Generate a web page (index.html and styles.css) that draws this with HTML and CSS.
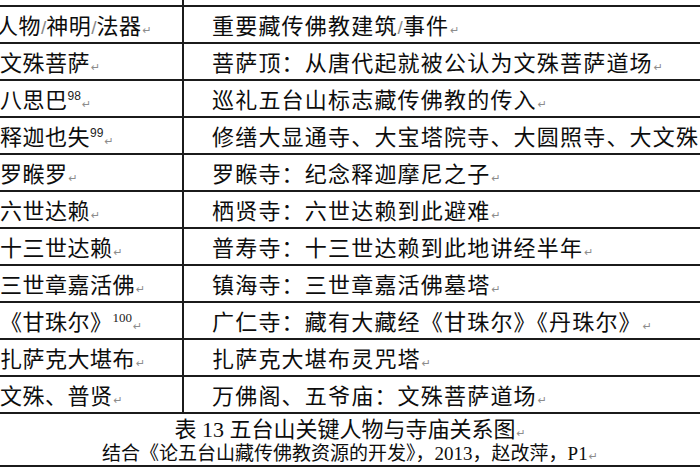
FILE: index.html
```html
<!DOCTYPE html>
<html lang="zh">
<head>
<meta charset="utf-8">
<link rel="stylesheet" href="styles.css">
</head>
<body>
<div class="sheet">
  <table class="grid">
    <colgroup><col class="c1"><col class="c2"></colgroup>
    <tr class="stub"><td class="k"></td><td class="v"></td></tr>
    <tr><td class="k"><div class="cell first">人物<span class="sl">/</span>神明<span class="sl">/</span>法器<span class="ret">↵</span></div></td><td class="v"><div class="cell">重要藏传佛教建筑<span class="sl">/</span>事件<span class="ret">↵</span></div></td></tr>
    <tr><td class="k"><div class="cell">文殊菩萨<span class="ret">↵</span></div></td><td class="v"><div class="cell">菩萨顶：从唐代起就被公认为文殊菩萨道场<span class="ret">↵</span></div></td></tr>
    <tr><td class="k"><div class="cell">八思巴<sup class="fn">98</sup><span class="ret">↵</span></div></td><td class="v"><div class="cell">巡礼五台山标志藏传佛教的传入<span class="ret">↵</span></div></td></tr>
    <tr><td class="k"><div class="cell">释迦也失<sup class="fn">99</sup><span class="ret">↵</span></div></td><td class="v"><div class="cell">修缮大显通寺、大宝塔院寺、大圆照寺、大文殊寺<span class="ret">↵</span></div></td></tr>
    <tr><td class="k"><div class="cell">罗睺罗<span class="ret">↵</span></div></td><td class="v"><div class="cell">罗睺寺：纪念释迦摩尼之子<span class="ret">↵</span></div></td></tr>
    <tr><td class="k"><div class="cell">六世达赖<span class="ret">↵</span></div></td><td class="v"><div class="cell">栖贤寺：六世达赖到此避难<span class="ret">↵</span></div></td></tr>
    <tr><td class="k"><div class="cell">十三世达赖<span class="ret">↵</span></div></td><td class="v"><div class="cell">普寿寺：十三世达赖到此地讲经半年<span class="ret">↵</span></div></td></tr>
    <tr><td class="k"><div class="cell">三世章嘉活佛<span class="ret">↵</span></div></td><td class="v"><div class="cell">镇海寺：三世章嘉活佛墓塔<span class="ret">↵</span></div></td></tr>
    <tr><td class="k"><div class="cell">《甘珠尔》<sup class="fn serif">100</sup><span class="ret">↵</span></div></td><td class="v"><div class="cell">广仁寺：藏有大藏经《甘珠尔》《丹珠尔》<span class="ret">↵</span></div></td></tr>
    <tr><td class="k"><div class="cell">扎萨克大堪布<span class="ret">↵</span></div></td><td class="v"><div class="cell">扎萨克大堪布灵咒塔<span class="ret">↵</span></div></td></tr>
    <tr class="last"><td class="k"><div class="cell">文殊、普贤<span class="ret">↵</span></div></td><td class="v"><div class="cell">万佛阁、五爷庙：文殊菩萨道场<span class="ret">↵</span></div></td></tr>
  </table>
  <div class="caption">
    <p class="cap1">表 13 五台山关键人物与寺庙关系图<span class="ret">↵</span></p>
    <p class="cap2">结合《论五台山藏传佛教资源的开发》，2013，赵改萍，P1<span class="ret">↵</span></p>
  </div>
</div>
</body>
</html>
```

FILE: styles.css
```css
html, body {
  margin: 0;
  padding: 0;
}
body {
  width: 700px;
  height: 470px;
  overflow: hidden;
  background: #ffffff;
  color: #0d0d0d;
  font-family: "Noto Sans CJK SC", "Noto Sans", sans-serif;
}
.sheet {
  width: 700px;
}
.grid {
  border-collapse: collapse;
  table-layout: fixed;
  width: 740px;
}
.c1 { width: 183px; }
.c2 { width: 557px; }
.grid td {
  padding: 0;
  border-top: 2px solid #1b1b1b;
  vertical-align: top;
}
.cell {
  height: 35px;
  overflow: visible;
  white-space: nowrap;
  font-size: 22px;
  line-height: 35px;
}
.grid td.k {
  border-right: 2px solid #1b1b1b;
}
.grid td.k .cell {
  letter-spacing: 0.5px;
}
.grid td.v .cell {
  padding-left: 28px;
  letter-spacing: 1.2px;
}
.cell.first {
  text-indent: -4px;
}
.grid tr.stub td {
  height: 5px;
  border-top: none;
}
.grid tr.last td {
  border-bottom: 2px solid #1b1b1b;
}
.sl {
  color: #8a8a8a;
  font-family: "Liberation Sans", sans-serif;
  font-size: 19px;
  letter-spacing: 0;
  line-height: 1;
}
.fn {
  font-family: "Liberation Sans", sans-serif;
  font-size: 12px;
  letter-spacing: 0;
  vertical-align: 8px;
  line-height: 0;
  color: #222;
}
.fn.serif {
  font-family: "Liberation Serif", serif;
  font-size: 13px;
}
.ret {
  font-family: "DejaVu Sans", sans-serif;
  font-size: 11px;
  line-height: 1;
  color: #8c8c8c;
  letter-spacing: 0;
  margin-left: 1px;
}
.caption {
  border-bottom: 2px solid #1b1b1b;
}
.cap1 {
  margin: 0;
  height: 25px;
  padding-top: 3px;
  text-align: center;
  font-family: "Liberation Serif", "Noto Sans CJK SC", serif;
  font-size: 22px;
  line-height: 25px;
  white-space: nowrap;
}
.cap2 {
  margin: 0;
  height: 23px;
  text-align: center;
  font-family: "Liberation Serif", "Noto Sans CJK SC", serif;
  font-size: 19px;
  line-height: 23px;
  white-space: nowrap;
}
```
